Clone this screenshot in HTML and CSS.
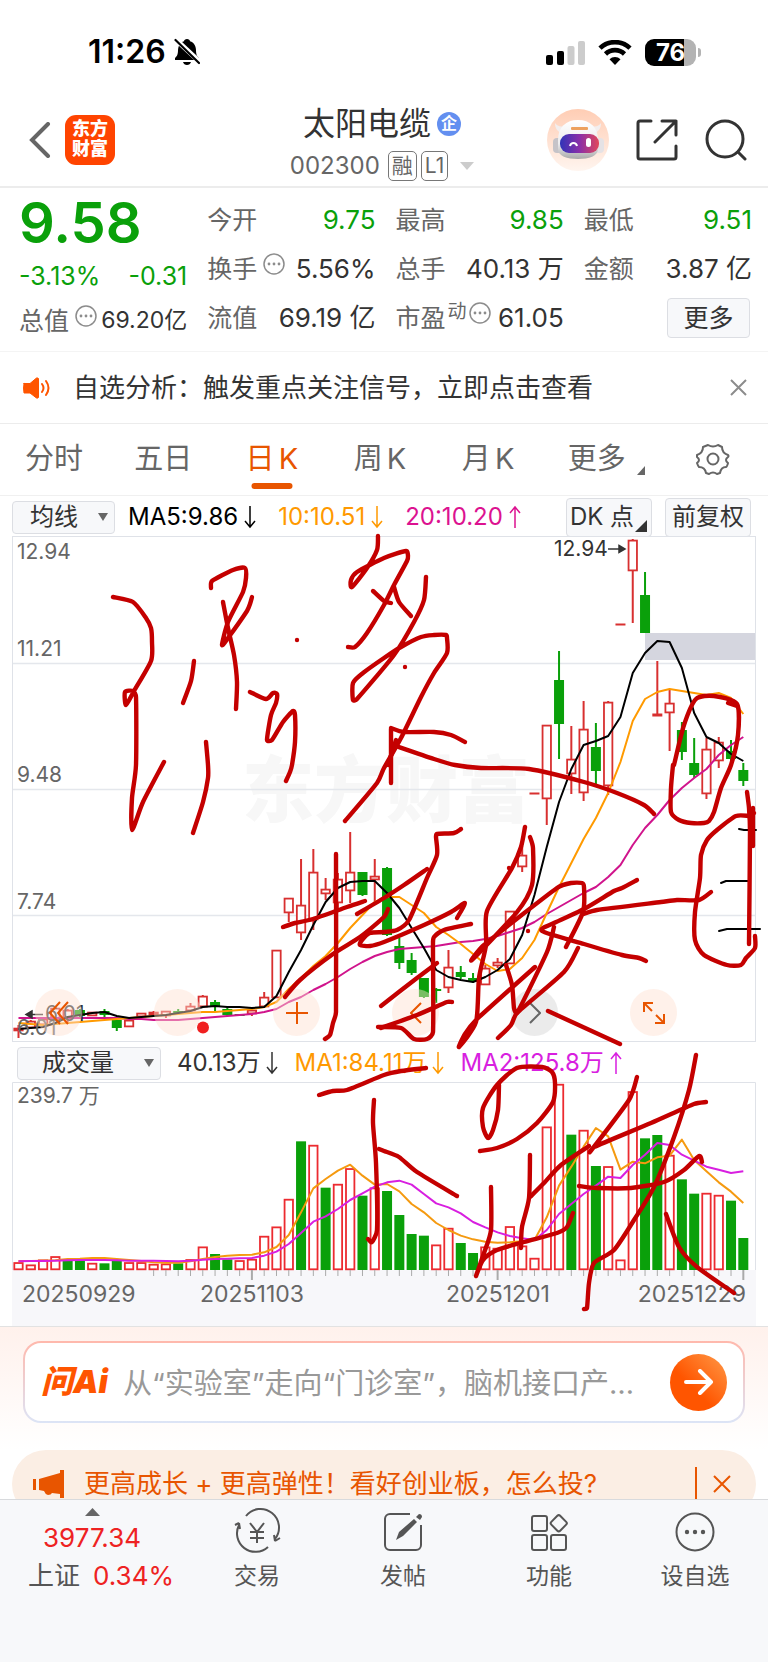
FILE: index.html
```html
<!DOCTYPE html>
<html lang="zh-CN">
<head>
<meta charset="utf-8">
<meta name="viewport" content="width=device-width, initial-scale=1">
<title>太阳电缆 002300</title>
<link rel="stylesheet" href="styles.css">
<script src="chart.js" defer></script>
</head>
<body>
<div class="status">
  <div class="status-left">
    <span class="clock">11:26</span>
    <svg class="bell" viewBox="0 0 26 28" width="26" height="28" aria-hidden="true"><path d="M13 1c1.800 0 2.800 1 3 2.200 4 1.300 6 4.800 6 9.300 0 4.500 1.500 6 3 7.500v2H1v-2c1.500-1.500 3-3 3-7.500 0-4.500 2-8 6-9.300C10.200 2 11.200 1 13 1zM9 24h8c-.6 2-2 3-4 3s-3.400-1-4-3z"/><path d="M-1-1 27 25" stroke="#fff" stroke-width="5"/><path d="M1.500 2 25 25" stroke="#000" stroke-width="2.200" stroke-linecap="round"/></svg>
  </div>
  <div class="status-right">
    <svg width="39" height="24" viewBox="0 0 39 24" aria-hidden="true"><rect y="14" width="7" height="10" rx="2"/><rect x="11" y="10" width="7" height="14" rx="2"/><rect x="21.500" y="5" width="7" height="19" rx="2" fill="#ccc"/><rect x="32" width="7" height="24" rx="2" fill="#ccc"/></svg>
    <svg width="34" height="25" viewBox="0 0 34 25" aria-hidden="true"><path d="M2 8.200a21.500 21.500 0 0 1 30 0M7.500 14a13.500 13.500 0 0 1 19 0" fill="none" stroke="#000" stroke-width="4.600"/><path d="M11.500 19.200a8 8 0 0 1 11 0L17 25z"/></svg>
    <span class="battery"><span class="battery-level">76</span></span>
  </div>
</div>

<header class="header">
  <div class="header-left">
    <button class="plain" aria-label="返回"><svg width="22" height="36" viewBox="0 0 22 36"><path d="M19 2 3 18l16 16" fill="none" stroke="#666" stroke-width="4" stroke-linecap="round"/></svg></button>
    <div class="logo">东方<br>财富</div>
  </div>
  <div class="header-title">
    <h1>太阳电缆<span class="badge">企</span></h1>
    <div class="code"><span>002300</span><span class="tag">融</span><span class="tag">L1</span><svg width="14" height="8" viewBox="0 0 14 8"><path d="M0 0h14L7 8z" fill="#ccc"/></svg></div>
  </div>
  <div class="header-right">
    <button class="plain" aria-label="智能助手">
      <svg width="62" height="62" viewBox="0 0 62 62">
        <defs>
          <linearGradient id="halo" x1="0" y1="0" x2="0" y2="1"><stop offset="0" stop-color="#ffcdb4"/><stop offset="1" stop-color="#fff5ef"/></linearGradient>
          <linearGradient id="visor"><stop offset="0" stop-color="#3034b8"/><stop offset=".5" stop-color="#8a2fa8"/><stop offset="1" stop-color="#e2485a"/></linearGradient>
          <linearGradient id="shell" x1="0" y1="0" x2="0" y2="1"><stop offset="0" stop-color="#fff"/><stop offset=".6" stop-color="#ececee"/><stop offset="1" stop-color="#aaa"/></linearGradient>
        </defs>
        <circle cx="31" cy="31" r="31" fill="url(#halo)"/>
        <path d="M8 14c0 5 2 8 6 10l4-7c-5 1-8 0-10-3zM54 14c0 5-2 8-6 10l-4-7c5 1 8 0 10-3z" fill="#f3eeee"/>
        <rect x="6" y="29" width="9" height="15" rx="4" fill="#c5c3c8"/><rect x="48" y="29" width="9" height="15" rx="4" fill="#e5e2e5"/>
        <path d="M11 31c0-13 8-20 20-20s20 7 20 20v9c0 7-9 10-20 10s-20-3-20-10z" fill="url(#shell)"/>
        <rect x="13" y="25" width="39" height="19" rx="9" fill="url(#visor)"/>
        <rect x="24" y="18" width="17" height="3" rx="1" fill="#eda15e"/>
        <path d="M23 37c1-4 6-4 7 0" fill="none" stroke="#fff" stroke-width="2"/><rect x="39" y="29" width="5" height="9" rx="2.500" fill="#fff"/>
      </svg>
    </button>
    <button class="plain" aria-label="分享"><svg width="42" height="42" viewBox="0 0 42 42" fill="none" stroke="#333" stroke-width="3" stroke-linecap="round" stroke-linejoin="round"><path d="M15 2H4a2 2 0 0 0-2 2v34a2 2 0 0 0 2 2h34a2 2 0 0 0 2-2V27M26 2h14v14M40 2 19 23"/></svg></button>
    <button class="plain" aria-label="搜索"><svg width="42" height="42" viewBox="0 0 42 42" fill="none" stroke="#333" stroke-width="3" stroke-linecap="round"><circle cx="20" cy="20" r="18"/><path d="m33 33 7 7"/></svg></button>
  </div>
</header>

<section class="quote">
  <div class="quote-col first">
    <div class="price">9.58</div>
    <div class="cell change"><span>-3.13%</span><span>-0.31</span></div>
    <div class="cell small"><span class="label">总值<svg class="more-dot" viewBox="0 0 22 22"><use href="#dots"/></svg></span><span>69.20亿</span></div>
  </div>
  <div class="quote-col">
    <div class="cell"><span class="label">今开</span><span class="down">9.75</span></div>
    <div class="cell"><span class="label">换手<svg class="more-dot" viewBox="0 0 22 22"><use href="#dots"/></svg></span><span>5.56%</span></div>
    <div class="cell"><span class="label">流值</span><span>69.19 亿</span></div>
  </div>
  <div class="quote-col">
    <div class="cell"><span class="label">最高</span><span class="down">9.85</span></div>
    <div class="cell"><span class="label">总手</span><span>40.13 万</span></div>
    <div class="cell"><span class="label tight">市盈<sup>动</sup><svg class="more-dot" viewBox="0 0 22 22"><use href="#dots"/></svg></span><span>61.05</span></div>
  </div>
  <div class="quote-col">
    <div class="cell"><span class="label">最低</span><span class="down">9.51</span></div>
    <div class="cell"><span class="label">金额</span><span>3.87 亿</span></div>
    <div class="cell end"><button class="box more-btn">更多</button></div>
  </div>
</section>

<svg class="sprite" aria-hidden="true"><symbol id="dots" viewBox="0 0 22 22"><circle cx="11" cy="11" r="10" fill="none" stroke="#8c8c8c" stroke-width="1.500"/><g fill="#8c8c8c"><circle cx="6" cy="11" r="1.400"/><circle cx="11" cy="11" r="1.400"/><circle cx="16" cy="11" r="1.400"/></g></symbol>
<symbol id="arrow-down" viewBox="0 0 12 24"><path d="M6 1v21M1 16l5 6 5-6" fill="none" stroke="currentColor" stroke-width="1.500"/></symbol>
<symbol id="arrow-up" viewBox="0 0 12 24"><path d="M6 23V2M1 8l5-6 5 6" fill="none" stroke="currentColor" stroke-width="1.500"/></symbol></svg>

<div class="notice">
  <svg width="27" height="22" viewBox="0 0 27 22" fill="none" stroke="#ff5500" stroke-width="2" stroke-linecap="round"><path d="M1 6.500h6L13.500 1q2-.5 2 1v18q0 1.500-2 1L7 16H1q-1-5 0-9.500z" fill="#ff5500" stroke-width="1"/><path d="M19 7q3 4 0 8M23 4q5 7 0 14"/></svg>
  <p>自选分析：触发重点关注信号，立即点击查看</p>
  <button class="plain" aria-label="关闭"><svg width="17" height="17" viewBox="0 0 17 17"><path d="m1 1 15 15M16 1 1 16" stroke="#8c8c8c" stroke-width="2"/></svg></button>
</div>

<nav class="tabs">
  <button>分时</button><button>五日</button><button class="k active">日 K</button><button class="k">周 K</button><button class="k">月 K</button>
  <button class="with-corner">更多<svg width="8" height="9" viewBox="0 0 8 9"><path d="M8 0v9H0z" fill="#666"/></svg></button>
  <button aria-label="设置"><svg width="34" height="32" viewBox="0 0 34 32" fill="none" stroke="#666" stroke-width="2" stroke-linejoin="round"><path d="M12 2q5 3 10 0l4 2q0 6 6 8v0q1 1 0 2-4 3 0 6-1 4-2 4-5 0-6 6l-3 1q-4-3-8 0l-3-1q-1-6-7-6-1-1-2-4 4-3 0-6l0-2q6-2 6-8z"/><circle cx="17" cy="16" r="5.500"/></svg></button>
</nav>

<section class="charts">
  <div class="legend price-legend">
    <div class="select"><select class="box" aria-label="主图指标"><option>均线</option></select><svg width="10" height="8" viewBox="0 0 10 8"><path d="M0 0h10L5 8z" fill="#666"/></svg></div>
    <span class="ind">MA5:9.86<svg><use href="#arrow-down"/></svg></span>
    <span class="ind amber">10:10.51<svg><use href="#arrow-down"/></svg></span>
    <span class="ind pink">20:10.20<svg><use href="#arrow-up"/></svg></span>
    <div class="legend-buttons">
      <button class="box dk">DK 点<svg width="12" height="12" viewBox="0 0 12 12"><path d="M12 0v12H0z" fill="#333"/></svg></button>
      <button class="box">前复权</button>
    </div>
  </div>
  <div class="plot">
    <svg id="price" viewBox="0 536 768 506" role="img" aria-label="日K线图"></svg>
    <div class="tools">
      <button aria-label="快退"><svg width="22" height="24" viewBox="0 0 22 24"><path d="M12 1 2 12l10 11M20 1 10 12l10 11"/></svg></button>
      <button aria-label="缩小"></button>
      <button aria-label="放大"><svg width="24" height="24" viewBox="0 0 24 24"><path d="M12 1v22M1 12h22"/></svg></button>
      <button aria-label="后退"><svg width="12" height="22" viewBox="0 0 12 22"><path d="M11 1 1 11l10 10"/></svg></button>
      <button class="grey" aria-label="前进"><svg width="12" height="22" viewBox="0 0 12 22"><path d="m1 1 10 10L1 21"/></svg></button>
      <button aria-label="全屏"><svg width="24" height="24" viewBox="0 0 24 24"><path d="M2 11V2h9M2 2l8 8M22 13v9h-9M22 22l-8-8"/></svg></button>
    </div>
  </div>
  <div class="legend volume-legend">
    <div class="select"><select class="box" aria-label="副图指标"><option>成交量</option></select><svg width="10" height="8" viewBox="0 0 10 8"><path d="M0 0h10L5 8z" fill="#666"/></svg></div>
    <span class="ind dark">40.13万<svg><use href="#arrow-down"/></svg></span>
    <span class="ind amber">MA1:84.11万<svg><use href="#arrow-down"/></svg></span>
    <span class="ind violet">MA2:125.8万<svg><use href="#arrow-up"/></svg></span>
  </div>
  <div class="plot"><svg id="volume" viewBox="0 1082 768 244" role="img" aria-label="成交量图"></svg></div>
  <svg id="ink" class="ink" viewBox="0 496 768 830" preserveAspectRatio="none" aria-hidden="true"></svg>
</section>

<section class="ask">
  <form class="ask-box">
    <label for="ask" class="ask-logo">问Ai</label>
    <input id="ask" type="text" placeholder="从“实验室”走向“门诊室”，脑机接口产…">
    <button type="button" class="send" aria-label="发送"><svg width="30" height="26" viewBox="0 0 30 26"><path d="M2 13h25M16 2l11 11-11 11" fill="none" stroke="#fff" stroke-width="4" stroke-linecap="round" stroke-linejoin="round"/></svg></button>
  </form>
</section>

<div class="banner">
  <svg width="32" height="28" viewBox="0 0 32 28" fill="#e85500"><path d="M0 9h3v11H0zM6 9 27 3V0h4v28h-4v-4l-8-1q-1 2-4 2-3-1-4-4l-5-1z"/></svg>
  <p>更高成长 + 更高弹性！看好创业板，怎么投?</p>
  <button class="plain" aria-label="关闭"><svg width="18" height="18" viewBox="0 0 18 18"><path d="m1 1 16 16M17 1 1 17" stroke="#e85500" stroke-width="2"/></svg></button>
</div>

<footer class="bar">
  <a class="index" href="#">
    <svg width="15" height="8" viewBox="0 0 15 8"><path d="M0 8h15L7.500 0z" fill="#666"/></svg>
    <span class="up">3977.34</span>
    <span class="index-row">上证<b class="up">0.34%</b></span>
  </a>
  <a href="#"><svg width="44" height="40" viewBox="0 0 44 40"><path d="M11 4A18.500 18.500 0 0 1 40 27M40 29l5-3M40 29l-1-6M33 35A18.500 18.500 0 0 1 4 13M4 11l-4 2M4 11l1 6M15 11l7 9 7-9M22 20v11M15 20h14M15 26h14"/></svg>交易</a>
  <a href="#"><svg width="38" height="38" viewBox="0 0 38 38"><path d="M26 1H6a5 5 0 0 0-5 5v26a5 5 0 0 0 5 5h26a5 5 0 0 0 5-5V12"/><path d="m12 27 3-8L30 6l3 3-14 14zM32 4l3-3q3 0 3 3l-2 3z" fill="#555" stroke="none"/></svg>发帖</a>
  <a href="#"><svg width="38" height="38" viewBox="0 0 38 38"><rect x="2" y="3" width="15" height="15" rx="2"/><rect x="2" y="22" width="15" height="15" rx="2"/><rect x="21" y="22" width="15" height="15" rx="2"/><rect x="22.500" y="4" width="12.500" height="12.500" rx="2" transform="rotate(45 28.750 10.250)"/></svg>功能</a>
  <a href="#"><svg width="40" height="40" viewBox="0 0 40 40"><circle cx="20" cy="20" r="18.500"/><g fill="#555" stroke="none"><circle cx="12" cy="20" r="2.200"/><circle cx="20" cy="20" r="2.200"/><circle cx="28" cy="20" r="2.200"/></g></svg>设自选</a>
</footer>
</body>
</html>
```
FILE: styles.css
```css
* { box-sizing: border-box; }
body {
  margin: 0;
  background: #fff;
  color: #333;
  font-family: Inter, "Noto Sans CJK SC", sans-serif;
  font-size: 24px;
  line-height: 1.2;
}
button, input, select { font: inherit; color: inherit; margin: 0; }
button { border: 0; background: none; padding: 0; }
svg { display: block; flex: none; }
p, h1 { margin: 0; font-weight: 400; }
.sprite { position: absolute; width: 0; height: 0; }
.plain { display: block; }
.box { background: #f7f8fa; border: 1px solid #dcdee3; border-radius: 4px; }

.status {
  display: flex;
  justify-content: space-between;
  align-items: center;
  height: 88px;
  padding: 17px 69px 0 88px;
  color: #000;
}
.status-left, .status-right { display: flex; align-items: center; }
.status-left { gap: 8px; }
.status-right { gap: 13px; }
.clock { font-size: 32px; font-weight: 600; }
.battery { position: relative; width: 51px; height: 27px; border-radius: 9px; background: linear-gradient(90deg, #000 39px, #b3b3b3 39px); color: #fff; font-size: 24px; font-weight: 700; line-height: 28px; text-align: center; margin-right: 3px; }
.battery::after { content: ""; position: absolute; right: -5px; top: 9px; width: 3px; height: 9px; border-radius: 0 4px 4px 0; background: #b3b3b3; }

.header {
  display: grid;
  grid-template-columns: 1fr auto 1fr;
  align-items: center;
  height: 100px;
  padding: 6px 21px 0 17px;
  border-bottom: 2px solid #ececec;
}
.header-left { display: flex; align-items: center; gap: 14px; padding-left: 12px; }
.logo { width: 50px; height: 50px; border-radius: 11px; background: #ff4400; color: #fff; font-size: 18px; font-weight: 900; line-height: 20px; text-align: center; padding-top: 4px; }
.header-title { display: flex; flex-direction: column; align-items: center; gap: 2px; padding-top: 6px; }
.header-title h1 { display: flex; align-items: center; gap: 6px; font-size: 32px; line-height: 44px; }
.badge { width: 24px; height: 24px; border-radius: 50%; background: #638ff0; color: #fff; font-size: 16px; font-weight: 700; line-height: 23px; text-align: center; }
.code { display: flex; align-items: center; gap: 4px; color: #666; height: 36px; }
.code > span:first-child { margin-right: 4px; }
.code svg { margin-left: 8px; }
.tag { height: 30px; border: 1px solid #777; border-radius: 5px; padding: 0 3px; font-size: 21px; line-height: 28px; }
.header-right { display: flex; align-items: center; justify-content: flex-end; gap: 27px; }

.quote { display: grid; grid-template-columns: repeat(4, 1fr); gap: 20px; padding: 7px 16px 9px 19px; border-bottom: 1px solid #f4f4f4; }
.quote-col { display: grid; grid-template-rows: repeat(3, 49px); }
.quote-col.first { grid-template-rows: 56px 49px 42px; }
.cell { display: flex; align-items: center; justify-content: space-between; font-size: 26px; white-space: nowrap; }
.cell.small { font-size: 23px; }
.cell.change { font-size: 25px; }
.change, .down, .price { color: #0aa00a; }
.price { font-size: 56px; line-height: 56px; font-weight: 600; }
.label { display: flex; align-items: center; gap: 6px; color: #666; font-size: 25px; }
.label.tight { gap: 2px; }
.label sup { font-size: 19px; align-self: flex-start; line-height: 19px; }
.more-dot { width: 22px; height: 22px; margin-bottom: 10px; }
.end { justify-content: flex-end; }
.more-btn { width: 83px; height: 40px; font-size: 25px; margin-right: 2px; line-height: 36px; }

.notice { display: flex; align-items: center; height: 72px; padding: 0 21px 0 23px; border-bottom: 1px solid #ececec; font-size: 26px; }
.notice p { flex: 1; padding-left: 23px; white-space: nowrap; }

.tabs { display: flex; align-items: center; justify-content: space-between; height: 72px; padding: 0 38px 0 25px; border-bottom: 1px solid #f0f0f0; color: #666; font-size: 29px; }
.tabs button { position: relative; height: 71px; padding-bottom: 1px; white-space: nowrap; word-spacing: -4px; }
.tabs .k { min-width: 57px; }
.tabs .active { color: #e85500; }
.tabs .active::after { content: ""; position: absolute; left: 50%; bottom: 6px; width: 41px; height: 6px; border-radius: 3px; background: #e85500; transform: translateX(-50%); }
.with-corner { display: flex; align-items: center; gap: 11px; }
.with-corner svg { margin-top: 22px; }

.charts { position: relative; }
.legend { display: flex; align-items: center; height: 40px; padding: 2px 17px 0 12px; font-size: 24px; white-space: nowrap; }
.select { position: relative; }
.select select { display: block; appearance: none; width: 103px; height: 33px; padding: 0 17px; font-size: 24px; line-height: 28px; }
.select svg { position: absolute; right: 7px; top: 12px; }
.ind { display: flex; align-items: center; gap: 6px; color: #000; }
.ind svg { width: 12px; height: 24px; }
.price-legend .ind { margin-left: 13px; }
.price-legend .ind + .ind { margin-left: 22px; }
.amber { color: #f90 !important; }
.ind.pink { color: #dc1290; }
.ind.violet { color: #d81fe0; }
.ind.dark { color: #333; }
.legend-buttons { display: flex; gap: 13px; margin-left: auto; }
.legend-buttons button { width: 86px; height: 39px; font-size: 24px; line-height: 36px; }
.dk { position: relative; }
.legend-buttons .dk { padding-right: 14px; }
.dk svg { position: absolute; right: 4px; bottom: 4px; }
.volume-legend { padding-left: 17px; }
.volume-legend select { width: 144px; padding: 0 24px; }
.volume-legend .ind { margin-left: 16px; }
.volume-legend .ind + .ind { margin-left: 16px; }

.plot { position: relative; }
.plot > svg { width: 100%; height: auto; }
.plot text { font-size: 21px; fill: #666; }
.plot .date { font-size: 23px; }
.plot .mark { fill: #333; }
.plot .watermark { font-size: 72px; font-weight: 900; fill: #f7f7f7; }
.tools { position: absolute; left: 35px; right: 91px; bottom: 6px; display: flex; justify-content: space-between; }
.tools button { display: grid; place-items: center; width: 47px; height: 47px; border-radius: 50%; background: rgba(255, 225, 208, .45); }
.tools path { fill: none; stroke: #e85500; stroke-width: 2; }
.tools .grey { background: rgba(215, 215, 215, .5); }
.tools .grey path { stroke: #666; }
.ink { position: absolute; inset: 0; width: 100%; height: 100%; pointer-events: none; fill: none; stroke: #c40000; stroke-width: 4.4; stroke-linecap: round; stroke-linejoin: round; }
.ink .thin { stroke: #000; stroke-width: 2; }

.ask { padding: 14px 23px 27px; border-top: 1px solid #e2e2e2; background: linear-gradient(#fff1ec, #fff); }
.ask-box { display: flex; align-items: center; height: 82px; padding: 0 16px; border: 2px solid transparent; border-radius: 18px; background: linear-gradient(#fff, #fff) padding-box, linear-gradient(#ffb8ac, #dce4f6) border-box; }
.ask-logo { color: #ff5500; font-size: 32px; font-weight: 900; font-style: italic; white-space: nowrap; }
.ask-box input { flex: 1; min-width: 0; border: 0; outline: 0; background: none; padding: 2px 0 0 15px; font-size: 29px; height: 46px; }
.ask-box input::placeholder { color: #999; }
.send { display: grid; place-items: center; width: 57px; height: 57px; border-radius: 50%; background: linear-gradient(45deg, #ff5500 40%, #ff9a48); margin-left: 12px; }

.banner { display: flex; align-items: center; height: 68px; margin: 0 12px; padding: 0 25px 0 21px; border-radius: 34px; background: #fbeee4; color: #e85500; font-size: 26px; }
.banner p { flex: 1; padding-left: 19px; white-space: nowrap; }
.banner .plain { height: 34px; padding-left: 16px; border-left: 2px solid #e85500; }

.bar { position: relative; display: grid; grid-template-columns: 184px repeat(4, 1fr); height: 163px; margin-top: -19px; border-top: 1px solid #d8dadd; background: #f7f8fa; }
.bar a { display: flex; flex-direction: column; align-items: center; gap: 6px; padding-top: 12px; color: #555; text-decoration: none; font-size: 23px; line-height: 36px; }
.bar a > svg { height: 40px; }
.bar a:not(.index) > svg { fill: none; stroke: #555; stroke-width: 2; overflow: visible; }
.bar .index { padding-top: 8px; gap: 6px; font-size: 26px; }
.bar .index > svg { height: 8px; }
.bar .index span { line-height: 32px; }
.bar .index-row { display: flex; gap: 13px; padding-left: 18px; }
.bar b { font-weight: 400; }
.up { color: #ee2222; }
```
FILE: chart.js
```javascript
const NS = 'http://www.w3.org/2000/svg';
const RED = '#d83030', GREEN = '#0aa00a';
const px = i => 18.5 + i * 12.285;

function add(parent, name, attrs, text) {
  const el = document.createElementNS(NS, name);
  for (const key in attrs) el.setAttribute(key, attrs[key]);
  if (text !== undefined) el.textContent = text;
  parent.appendChild(el);
  return el;
}
function series(parent, ys, color, width) {
  add(parent, 'polyline', { points: ys.map((y, i) => px(i) + ',' + y).join(' '), fill: 'none', stroke: color, 'stroke-width': width, 'stroke-linejoin': 'round' });
}
/* pen stroke through the points, corners slightly rounded */
function penPath(points) {
  const p = points.split(' ').map(s => s.split(',').map(Number));
  const k = 0.12, last = p.length - 1;
  let d = 'M' + p[0];
  for (let i = 0; i < last; i++) {
    const a = p[Math.max(0, i - 1)], b = p[i], c = p[i + 1], e = p[Math.min(last, i + 2)];
    const len = Math.hypot(c[0] - b[0], c[1] - b[1]);
    const ka = Math.min(k, .35 * len / (Math.hypot(c[0] - a[0], c[1] - a[1]) || 1));
    const kb = Math.min(k, .35 * len / (Math.hypot(e[0] - b[0], e[1] - b[1]) || 1));
    d += `C${b[0] + (c[0] - a[0]) * ka} ${b[1] + (c[1] - a[1]) * ka} ${c[0] - (e[0] - b[0]) * kb} ${c[1] - (e[1] - b[1]) * kb} ${c[0]} ${c[1]}`;
  }
  return d;
}

/* high, body top, body bottom, low, direction */
const candles = [
  [1025,1028,1031,1038,'r'],[1020,1021,1028,1029,'r'],[1018,1019,1025,1026,'r'],[1007,1008,1020,1021,'r'],[1009,1010,1018,1024,'r'],
  [1009,1010,1016,1017,'g'],[1012,1012,1016,1016,'r'],[1009,1011,1015,1017,'g'],[1020,1020,1028,1031,'g'],[1020,1020,1027,1027,'r'],
  [1013,1013,1017,1017,'r'],[1011,1012,1015,1015,'r'],[1011,1011,1016,1018,'r'],[1009,1011,1013,1014,'g'],[1003,1006,1011,1011,'r'],
  [995,996,1007,1007,'r'],[1000,1002,1006,1011,'g'],[1007,1009,1015,1016,'g'],[1014,1014,1016,1016,'g'],[1010,1010,1014,1016,'r'],
  [992,997,1007,1007,'r'],[950,950,998,998,'r'],[898,898,913,922,'r'],[859,905,933,940,'r'],[849,872,920,930,'r'],
  [878,889,894,900,'r'],[873,879,903,908,'r'],[832,872,891,903,'r'],[872,872,895,896,'g'],[859,876,880,905,'r'],
  [867,868,935,936,'g'],[938,946,963,969,'g'],[953,960,973,975,'g'],[978,978,997,998,'g'],[988,989,991,1003,'g'],
  [950,967,988,993,'r'],[966,972,977,979,'g'],[973,978,982,983,'g'],[965,968,985,985,'r'],[958,962,966,968,'r'],
  [911,911,964,964,'r'],[846,855,867,872,'r'],[793,793,794,794,'r'],[725,725,799,825,'r'],[651,680,724,759,'g'],
  [726,759,774,794,'r'],[701,729,793,801,'r'],[723,747,771,785,'g'],[701,702,786,795,'r'],[624,624,625,625,'r'],
  [539,540,571,623,'r'],[572,595,633,633,'g'],[661,714,716,716,'r'],[689,703,713,751,'r'],[722,730,752,760,'g'],
  [738,763,775,778,'g'],[738,749,794,799,'r'],[737,742,761,768,'r'],[740,751,759,763,'g'],[763,770,781,786,'g']
];
const ma5 = [1029,1028,1027,1023,1017,1015,1013,1012,1016,1018,1017,1016,1015,1013,1011,1007,1006,1007,1007,1008,1007,996,972,950,925,902,888,882,881,881,893,908,928,948,970,977,980,982,977,970,959,935,895,847,802,769,745,741,736,717,673,653,641,642,668,713,737,743,754,761];
const ma10 = [1023,1024,1025,1024,1023,1022,1021,1020,1019,1018,1017,1016,1015,1014,1013,1012,1012,1011,1010,1009,1007,1002,989,978,966,956,943,928,915,902,897,897,905,913,927,935,944,954,964,971,969,958,940,913,887,863,839,818,793,762,721,699,692,689,691,693,695,693,698,714];
const ma20 = [1018,1018,1018,1018,1018,1018,1018,1018,1018,1019,1019,1020,1020,1020,1019,1018,1017,1016,1015,1014,1012,1009,1002,997,990,984,977,969,962,956,952,949,948,947,946,944,942,941,939,936,932,928,922,914,907,900,893,887,877,865,845,828,815,800,788,778,769,755,745,737];

/* bar heights in thirds of a pixel */
const volumes = [23,16,31,41,30,28,21,20,27,23,23,18,19,20,32,70,48,32,29,33,102,130,213,386,375,247,258,305,223,247,237,165,108,103,76,126,81,51,70,66,131,73,36,430,558,406,420,312,311,31,536,395,405,345,272,229,231,225,208,96];
const colors = 'rrrrggrggrrrrgrrggrrrrrgrgrrgrggggrrggrrrrrrrgrgrrrggrggrrgg';
const vma1 = [27,27,28,29,33,34,36,36,33,30,27,23,22,22,26,33,39,43,45,46,53,69,105,173,245,273,298,316,283,256,258,236,198,173,141,120,103,92,85,82,83,86,90,158,253,310,370,426,401,301,325,320,338,343,391,330,296,263,235,201];
const vma2 = [26,27,27,28,29,30,30,30,29,28,28,28,27,26,28,31,33,34,35,36,43,55,78,111,145,161,183,210,230,250,263,268,256,228,200,188,170,144,128,113,102,95,90,120,168,198,228,253,280,276,315,346,381,375,346,328,310,301,291,296];

const price = document.getElementById('price');
add(price, 'rect', { x: 12.5, y: 536.5, width: 743, height: 505, fill: 'none', stroke: '#dfe2e8' });
add(price, 'text', { class: 'watermark', x: 242, y: 816 }, '东方财富');
add(price, 'path', { d: 'M13 663.500H755M13 789.500H755M13 915.500H755', stroke: '#e4e7ec', 'stroke-width': 1.3 });
add(price, 'rect', { x: 645, y: 633, width: 110, height: 27, fill: '#d5d6df' });
candles.forEach(([h, t, b, l, c], i) => {
  const x = px(i), color = c === 'r' ? RED : GREEN;
  add(price, 'path', { d: `M${x} ${h}V${t}M${x} ${b}V${l}`, stroke: color, 'stroke-width': 2 });
  if (c === 'g') add(price, 'rect', { x: x - 5, y: t, width: 10, height: b - t, fill: color });
  else if (b - t < 3) add(price, 'rect', { x: x - 5, y: t - .5, width: 10, height: Math.max(2, b - t + 1), fill: color });
  else add(price, 'rect', { x: x - 4.2, y: t + .6, width: 8.4, height: b - t - 1.2, fill: '#fff', stroke: color, 'stroke-width': 1.8 });
});
series(price, ma20, '#d0148c', 2);
series(price, ma10, '#ff9a00', 2);
series(price, ma5, '#000', 2);
add(price, 'circle', { cx: 203, cy: 1027.5, r: 6, fill: '#f02020' });
[['12.94', 559], ['11.21', 656], ['9.48', 782], ['7.74', 909], ['6.01', 1035]].forEach(([s, y]) => add(price, 'text', { x: 17, y }, s));
add(price, 'text', { class: 'mark', x: 554, y: 556 }, '12.94');
add(price, 'text', { class: 'mark', x: 45, y: 1021 }, '6.01');
add(price, 'path', { d: 'M608 549H624M619 545.500 625 549 619 552.500zM43 1014.500H27M32 1011 26 1014.500 32 1018z', stroke: '#333', 'stroke-width': 1.5, fill: '#333' });

const volume = document.getElementById('volume');
add(volume, 'path', { d: 'M12.500 1270V1082.500H755.500V1270', fill: 'none', stroke: '#dfe2e8' });
add(volume, 'rect', { x: 12, y: 1270, width: 744, height: 56, fill: '#f7f7fa' });
volumes.forEach((v, i) => {
  const x = px(i), h = v / 3;
  if (colors[i] === 'g') add(volume, 'rect', { x: x - 5, y: 1270 - h, width: 10, height: h, fill: GREEN });
  else add(volume, 'rect', { x: x - 4.2, y: 1270 - h + .7, width: 8.4, height: h - 1.4, fill: '#fff', stroke: '#ec2b30', 'stroke-width': 1.8 });
  if (i > 10) add(volume, 'path', { d: `M${x} 1270v${i % 20 === 19 ? 10 : 6}`, stroke: '#aaa', 'stroke-width': i % 20 === 19 ? 2 : 1 });
});
series(volume, vma1.map(v => 1270 - v / 3), '#f59a10', 2);
series(volume, vma2.map(v => 1270 - v / 3), '#d81fe0', 2);
add(volume, 'text', { x: 17, y: 1103 }, '239.7 万');
[['20250929', 22, 'start'], ['20251103', 252, 'middle'], ['20251201', 498, 'middle'], ['20251229', 746, 'end']]
  .forEach(([s, x, a]) => add(volume, 'text', { class: 'date', x, y: 1302, 'text-anchor': a }, s));

const strokes = [
  '113,597 133,602 146,618 151,628 152,642 151,661 134,691 126,705 125,692 133,691 136,697 136,765 132,798 132,830 143,802 164,762',
  '194,661 191,681 183,703',
  '206,742 208,765 208,778 203,802 193,833',
  '211,588 212,581 233,570 245,568 246,578 243,592 228,622 222,645 228,638 247,611 250,604 252,597',
  '223,602 228,628 234,655 237,682 236,709',
  '297,640 297,640',
  '250,692 266,699 273,693 277,694 276,703 271,715 267,740 272,740 283,722 293,711 295,715 295,742 292,765 290,772 286,781',
  '378,536 377,550 367,568 352,587 351,580 357,572 384,558 406,551 408,556 407,561 394,585 384,605 367,633 355,647 348,647',
  '373,591 384,601 391,603',
  '394,587 399,602 411,616',
  '426,577 424,600 414,622 394,655 357,699 353,700 353,683 363,673 384,658 401,647 421,637 434,635 446,635 447,638 447,653 434,673 421,697 401,738 384,768 377,783 345,821',
  '405,667 405,667',
  '391,729 391,783',
  '391,728 404,732 434,732 451,735 465,742',
  '396,740 388,765',
  '393,745 434,759 455,765 481,768 529,769 584,782 617,793 644,805 654,814',
  '728,703 737,706',
  '674,765 684,725 696,699 714,696 737,704 738,735 731,765 721,788 714,812 709,821 704,823 691,823 679,820 671,812 671,788 673,765',
  '747,792 749,808 750,832 749,944',
  '753,808 753,846',
  '754,813 751,816 736,816 717,830 707,840 701,855 700,878 695,912 695,940 704,955 727,965 741,965 746,958 755,948 755,936',
  '336,854 336,1012 333,1023 330,1035 325,1039',
  '283,927 295,923 313,919 347,907 365,901',
  '285,997 300,980 333,954 360,937 384,917 388,909',
  '357,914 384,898 404,885 427,869',
  '461,829 454,833 437,834 436,837 437,855 427,878 409,920 397,930 384,932 370,933 362,940 360,945 370,946 384,942 424,925 451,912 465,903 457,918',
  '471,924 444,930 434,937 433,945 433,1032 427,1039 414,1039 401,1028 378,1027',
  '437,963 417,978 381,1006',
  '452,1002 447,1002 417,1015 381,1028',
  '525,827 521,847 512,868 487,911 486,945 479,978 476,1022 459,1047 465,1034 476,1020 535,967',
  '509,868 509,868',
  '528,931 528,931',
  '530,837 533,848 532,885 517,912 472,960 484,945 557,888 571,883 582,883 584,887 583,912 566,947',
  '637,880 622,888 614,891 584,909 554,923 542,931 584,944 622,955 639,958 646,961',
  '583,914 597,910 661,902 677,900 699,900 711,892',
  '554,927 547,952 517,1013 514,1008 512,985 506,965',
  '578,948 564,972 517,1013 511,1025 498,1038',
  '548,1011 620,1044',
  '319,1095 333,1091 347,1090 384,1075 401,1071 426,1068',
  '374,1100 373,1123 376,1163 377,1230 372,1242 368,1239',
  '379,1149 384,1151 399,1157 417,1172 457,1196',
  '499,1085 498,1110 493,1130 488,1138 483,1127 483,1108 497,1085 517,1068 542,1067 552,1072 555,1083 553,1102 537,1123 517,1139 497,1148 480,1151',
  '491,1187 491,1230 484,1253 476,1276 483,1260 497,1250 524,1242 557,1233 567,1227 573,1213',
  '530,1155 529,1198 522,1227 521,1248',
  '530,1197 544,1183 561,1165 589,1146',
  '637,1077 629,1100 590,1152 594,1147 651,1123 694,1104 706,1102',
  '579,1186 597,1188 631,1188 664,1182 684,1170 699,1156 702,1162',
  '696,1055 689,1090 674,1137 654,1187 634,1220 614,1250 594,1263 589,1283 587,1308 584,1309',
  '666,1214 679,1247 697,1267 734,1293'
];
const ink = document.getElementById('ink');
['739,829 744,830 756,830', '721,883 726,881 748,881', '719,931 727,929 760,929'].forEach(points => add(ink, 'polyline', { points, class: 'thin' }));
strokes.forEach(points => add(ink, 'path', { d: penPath(points) }));
```
